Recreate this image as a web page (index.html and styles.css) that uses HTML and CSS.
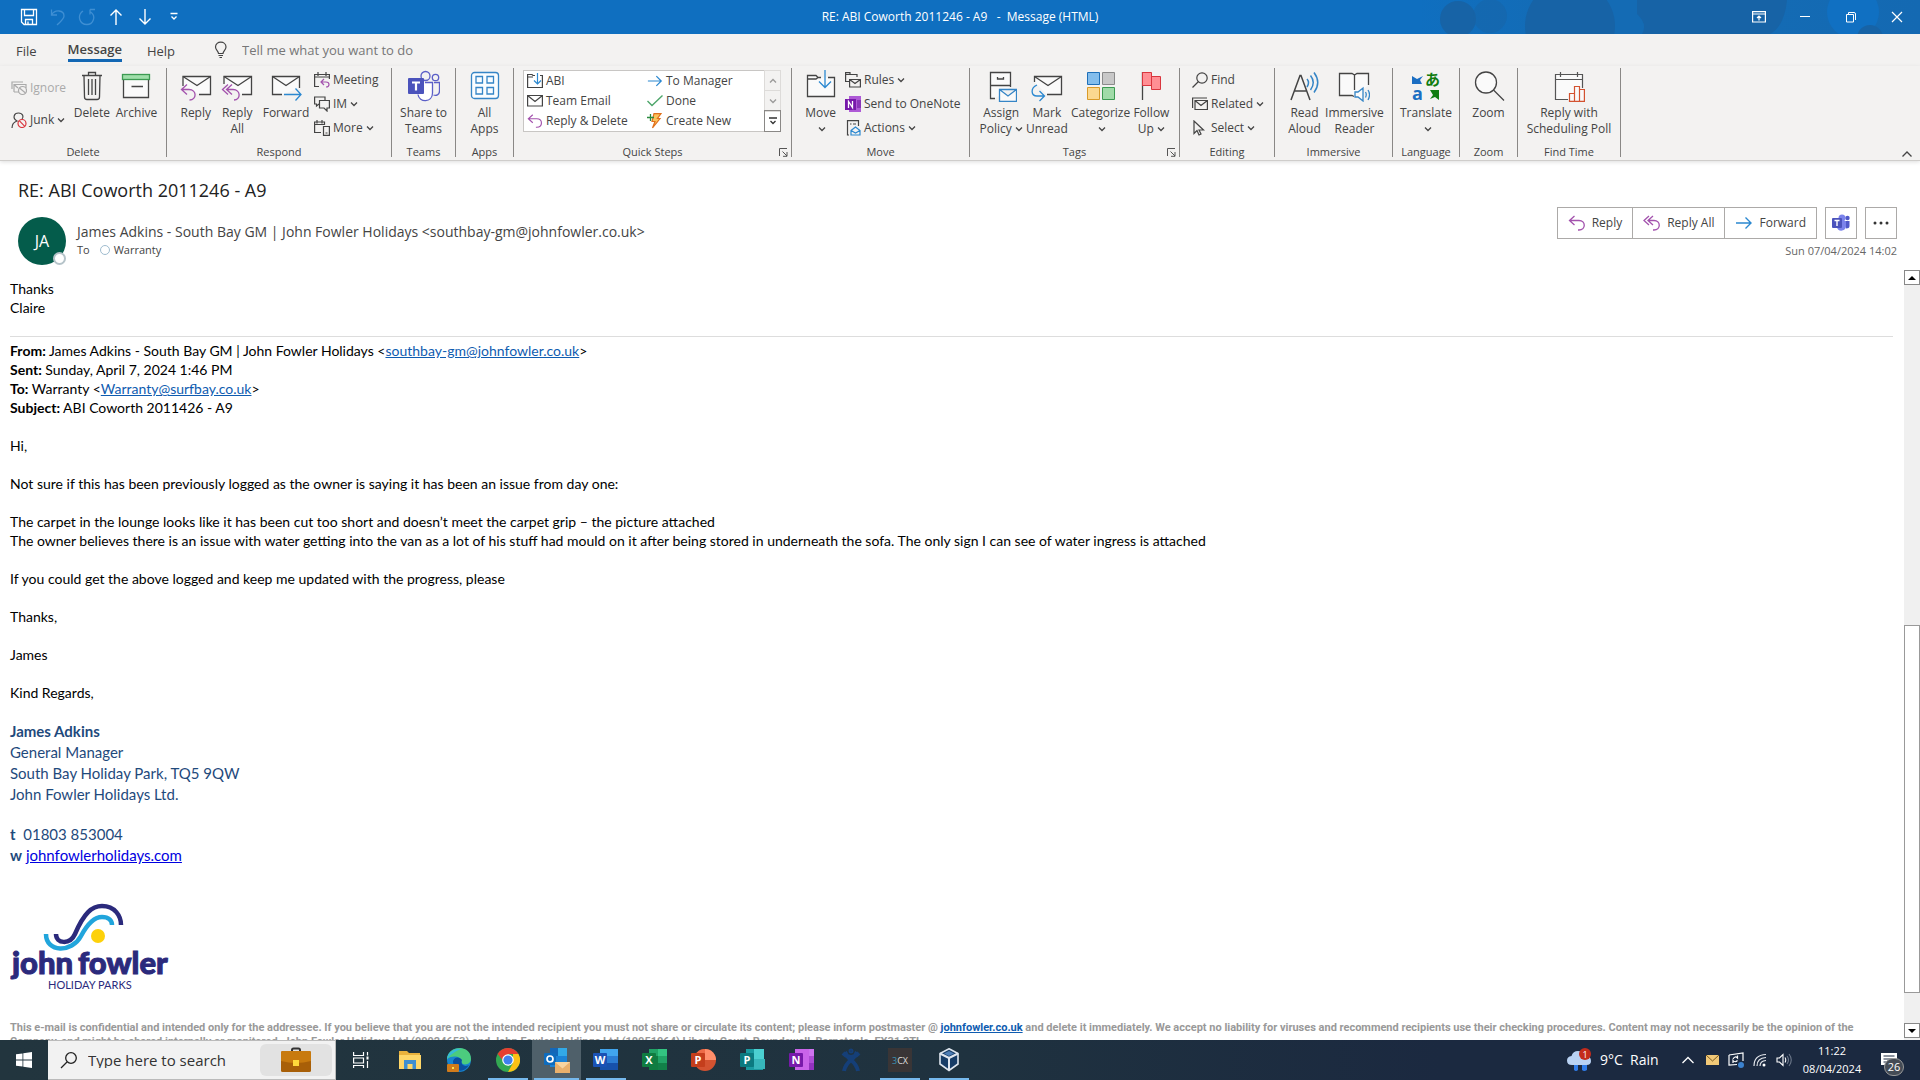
FILE: index.html
```html
<!doctype html>
<html lang="en">
<head>
  <meta charset="utf-8">
  <title>RE: ABI Coworth 2011246 - A9 - Message (HTML)</title>
  <link rel="stylesheet" href="styles.css">
</head>
<body>
  <!-- shared icons -->
  <svg class="defs" width="0" height="0">
    <symbol id="chev" viewBox="0 0 8 8"><path d="M1 2.500L4 5.500L7 2.500" fill="none" stroke="#444" stroke-width="1.300"/></symbol>
    <symbol id="reply" viewBox="0 0 18 16"><path d="M6.500 1L1.500 5.500L6.500 10M1.500 5.500H11C18 5.500 18 15 11 15H10" fill="none" stroke="#a352ad" stroke-width="1.300"/></symbol>
    <symbol id="replyall" viewBox="0 0 18 16"><path d="M6 1L1 5.500L6 10M10 1L5 5.500L10 10M5 5.500H11C18 5.500 18 15 11 15H10" fill="none" stroke="#a352ad" stroke-width="1.300"/></symbol>
    <symbol id="forward" viewBox="0 0 18 16"><path d="M1 8H16M10.500 2.500L16 8L10.500 13.500" fill="none" stroke="#2b88d0" stroke-width="1.400"/></symbol>
    <symbol id="launch" viewBox="0 0 9 9"><path d="M.5 8V.5H8M3.500 3.500L8 8M8 4V8.300H4" fill="none" stroke="#555"/></symbol>
  </svg>

  <header class="titlebar">
    <svg class="bubbles" width="500" height="34" viewBox="0 0 500 34">
      <defs><linearGradient id="fade"><stop offset="0" stop-color="#0f6fc0"/><stop offset=".3" stop-color="#146bb4"/><stop offset=".7" stop-color="#146bb4"/><stop offset="1" stop-color="#1469b2"/></linearGradient></defs>
      <rect width="500" height="34" fill="url(#fade)"/>
      <g fill="#1763a6">
        <circle cx="38" cy="19" r="18"/><circle cx="70" cy="16" r="17" opacity=".5"/><circle cx="150" cy="26" r="45"/>
        <path d="M217 0H367C365 20 358 30 350 34H222Q228 24 217 14Z"/>
      </g>
      <circle cx="433" cy="12" r="26" fill="#1070c2"/>
      <circle cx="450" cy="38" r="13" fill="#1763a6"/>
    </svg>
    <div class="quick">
      <button aria-label="Save"><svg width="18" height="18" fill="none" stroke="#fff" stroke-width="1.300"><path d="M1.500 1.500H16.500V16.500H4L1.500 14ZM4.500 1.500V7.500H13.500V1.500M5.500 16V11.500H12.500V16M8 16V13.500"/></svg></button>
      <button aria-label="Undo"><svg width="18" height="18" fill="none" stroke="#3f8fd3" stroke-width="1.300"><path d="M2.500 1.500V7H8M2.500 7C6 1 15 2 15 8C15 11 12 13 8 17"/></svg></button>
      <button aria-label="Redo"><svg width="18" height="18" fill="none" stroke="#3f8fd3" stroke-width="1.300"><path d="M12 1.500H17M12 1.500V6.500M12 3.500C19 8 15 16.500 9 16.500C1 16.500 -1 7 5 3"/></svg></button>
      <button aria-label="Previous"><svg width="18" height="18" fill="none" stroke="#fff" stroke-width="1.400"><path d="M9 17V2M3.500 7.500L9 2L14.500 7.500"/></svg></button>
      <button aria-label="Next"><svg width="18" height="18" fill="none" stroke="#fff" stroke-width="1.400"><path d="M9 1V16M3.500 10.500L9 16L14.500 10.500"/></svg></button>
      <button aria-label="Customise"><svg width="18" height="18" fill="none" stroke="#fff" stroke-width="1.300"><path d="M5.500 5.500H12.500M6.500 8.500L9 11L11.500 8.500"/></svg></button>
    </div>
    <div class="caption">RE: ABI Coworth 2011246 - A9 &nbsp; - &nbsp;Message (HTML)</div>
    <div class="window-buttons">
      <button aria-label="Ribbon options"><svg width="14" height="12" fill="none" stroke="#fff" stroke-width="1.200"><path d="M.6 .6H13.400V11H.6ZM.6 3H13.400M7 9.500V5M5 7L7 5L9 7"/></svg></button>
      <button aria-label="Minimise"><svg width="12" height="12" stroke="#fff"><path d="M1 5.500H11"/></svg></button>
      <button aria-label="Restore"><svg width="12" height="12" fill="none" stroke="#fff"><path d="M1.500 3.500H8.500V11H1.500ZM3.500 3V1.500H9Q10.500 1.500 10.500 3V9"/></svg></button>
      <button aria-label="Close"><svg width="12" height="12" stroke="#fff" stroke-width="1.200"><path d="M1 1L11 11M11 1L1 11"/></svg></button>
    </div>
  </header>

  <nav class="tabs">
    <button class="tab">File</button>
    <button class="tab active">Message</button>
    <button class="tab">Help</button>
    <svg class="bulb" width="14" height="18" fill="none" stroke="#444" stroke-width="1.200"><path d="M4.500 12.500C4.500 10 1.500 9 1.500 6C1.500 -.5 12 -.5 12 6C12 9 9 10 9 12.500ZM4.500 14.500H9M5.500 16.500H8"/></svg>
    <input class="tell" type="text" aria-label="Tell me" placeholder="Tell me what you want to do">
  </nav>

  <div class="ribbon">
    <section class="group g-delete">
      <div class="tools">
        <div class="stack two">
          <button class="small off"><svg width="16" height="16" fill="none" stroke="#aaa" stroke-width="1.200"><path d="M1 9V2H12M3 12V4.500H15V8M3 4.500L7 8M8 12H3"/><circle cx="11.500" cy="10.500" r="4"/><path d="M8.500 8L14.500 13"/></svg>Ignore</button>
          <button class="small"><svg width="16" height="16" fill="none" stroke="#444" stroke-width="1.200"><path d="M1 16C1 12 3 10 6 9C1 6 3 1 7.500 1C12 1 13 5 11 7"/><g stroke="#d9363e"><circle cx="11" cy="11.500" r="4"/><path d="M8.200 8.700L13.800 14.300"/></g></svg>Junk<svg class="chev"><use href="#chev"/></svg></button>
        </div>
        <button class="big"><svg width="32" height="32" fill="none" stroke="#444" stroke-width="1.300"><path d="M6 5.500H26M12.500 5V2.500H19.500V5M8 6L8.500 27Q8.500 29.500 11 29.500H21Q23.500 29.500 23.500 27L24 6M12.500 9V25M16 9V25M19.500 9V25"/></svg>Delete</button>
        <button class="big"><svg width="32" height="32" fill="none" stroke="#444" stroke-width="1.300"><path fill="#fafafa" d="M3.500 9.500V27.500H28.500V9.500M11.500 16.500H23"/><rect x="2.500" y="4.500" width="27" height="5" fill="#9fdfaa" stroke="#3c9a52"/></svg>Archive</button>
      </div>
      <div class="name">Delete</div>
    </section>

    <section class="group g-respond">
      <div class="tools">
        <button class="big"><svg width="32" height="32" fill="none" stroke="#444" stroke-width="1.300"><path fill="#fafafa" d="M3 16V6.500H30.500V24.500H19"/><path d="M3 6.500L17 15.500L30.500 6.500"/><path d="M7 14.500L1.500 19.500L7 24.500M2 19.500H9C17 19.500 17 30 9.500 30" stroke="#a352ad"/></svg>Reply</button>
        <button class="big"><svg width="32" height="32" fill="none" stroke="#444" stroke-width="1.300"><path fill="#fafafa" d="M3 14V6.500H30.500V24.500H21"/><path d="M3 6.500L17 15.500L30.500 6.500"/><path d="M7 14.500L1.500 19.500L7 24.500M11 14.500L5.500 19.500L11 24.500M6 19.500H12C20 19.500 20 30 13 30" stroke="#a352ad"/></svg>Reply<br>All</button>
        <button class="big"><svg width="32" height="32" fill="none" stroke="#444" stroke-width="1.300"><path fill="#fafafa" d="M12 24.500H2.500V6.500H29.500V18"/><path d="M2.500 6.500L16 15.500L29.500 6.500"/><path d="M14 24.500H31M25.500 18.500L31 24.500L25.500 30.500" stroke="#2b88d0"/></svg>Forward</button>
        <div class="stack">
          <button class="small"><svg width="16" height="16" fill="none" stroke="#444" stroke-width="1.200"><path d="M5 14.500H.6V2.500H15.400V7M.6 5H15.400M4 0V4M12 0V4"/><path d="M10 7L7 10L10 13M7 10H12C16 10 16 15 12 15" stroke="#a352ad"/></svg>Meeting</button>
          <button class="small"><svg width="16" height="16" fill="none" stroke="#444" stroke-width="1.200"><path d="M5 8L2.500 10V8H.6V1H11V4M5.500 4.500H15.400V12H13V15L10 12H5.500Z"/></svg>IM<svg class="chev"><use href="#chev"/></svg></button>
          <button class="small"><svg width="16" height="16" fill="none" stroke="#444" stroke-width="1.200"><path d="M7 12.500H.6V2H10.500V5M.6 4.500H10.500M3 0V3.500M8 0V3.500M9.500 6.500H15.400V15.400H9.500ZM11.500 13H13.500"/></svg>More<svg class="chev"><use href="#chev"/></svg></button>
        </div>
      </div>
      <div class="name">Respond</div>
    </section>

    <section class="group g-teams">
      <div class="tools">
        <button class="big"><svg width="32" height="32" fill="none" stroke="#5b5fc7" stroke-width="1.300"><path fill="#fff" d="M17 12.500H24.500V23C24.500 33 11 33 10 24.500"/><path d="M26 12.500H31.500V21C31.500 25 28 26 25.500 25"/><circle cx="17.500" cy="6" r="4.500"/><circle cx="27.500" cy="7.500" r="3.200"/><rect x="0" y="8" width="16" height="16" rx="1" fill="#4b53bc" stroke="none"/><path d="M4 12.500H12M8 12.500V20.500" stroke="#fff" stroke-width="2.200"/></svg>Share to<br>Teams</button>
      </div>
      <div class="name">Teams</div>
    </section>

    <section class="group g-apps">
      <div class="tools">
        <button class="big"><svg width="32" height="32" fill="#fafdff" stroke="#3585c6" stroke-width="1.300"><rect x="2.500" y="2.500" width="27" height="26" rx="3"/><path d="M7 6.500H13.500V13H7ZM18 6.500H24.500V13H18ZM7 17.500H13.500V24H7ZM18 17.500H24.500V24H18Z"/></svg>All<br>Apps</button>
      </div>
      <div class="name">Apps</div>
    </section>

    <section class="group g-quick">
      <div class="tools">
        <div class="gallery">
          <div class="steps">
            <button class="small"><svg width="16" height="16" fill="none" stroke="#444" stroke-width="1.200"><path d="M8 2.500H6L5 1.500H.6V14.500H15.400V2.500H13M.6 4H6"/><path d="M10.500 0V11M7 7.500L10.500 11L14 7.500" stroke="#2b88d0"/></svg>ABI</button>
            <button class="small"><svg width="16" height="16"><use href="#forward"/></svg>To Manager</button>
            <button class="small"><svg width="16" height="16" fill="none" stroke="#444" stroke-width="1.200"><path d="M.6 2.500H15.400V13H.6ZM.6 2.500L8 8.500L15.400 2.500"/></svg>Team Email</button>
            <button class="small"><svg width="16" height="16" fill="none" stroke="#4da66a" stroke-width="1.400"><path d="M.5 8L5 12.500L15.500 2.500"/></svg>Done</button>
            <button class="small"><svg width="16" height="16"><use href="#reply"/></svg>Reply &amp; Delete</button>
            <button class="small"><svg width="16" height="16" fill="none"><path d="M7 .6H14L10.500 5.500H13L5.500 15L8 8.500H5Z" fill="#fbc35a" stroke="#e0701c" stroke-width="1.200"/><path d="M0 4.500H7M3.500 1V8" stroke="#2b8a3e" stroke-width="1.300"/></svg>Create New</button>
          </div>
          <div class="spin">
            <button aria-label="Up" disabled><svg class="chev flip"><use href="#chev"/></svg></button>
            <button aria-label="Down" disabled><svg class="chev"><use href="#chev"/></svg></button>
            <button aria-label="More steps"><svg width="8" height="8" fill="none" stroke="#333" stroke-width="1.300"><path d="M0 1H8M1.500 4L4 6.500L6.500 4"/></svg></button>
          </div>
        </div>
      </div>
      <div class="name">Quick Steps<button class="launch" aria-label="Manage quick steps"><svg width="9" height="9"><use href="#launch"/></svg></button></div>
    </section>

    <section class="group g-move">
      <div class="tools">
        <button class="big"><svg width="32" height="32" fill="none" stroke="#444" stroke-width="1.300"><path fill="#fafafa" d="M16 7.500H13L11 5.500H2.500V26.500H29.500V7.500H23M2.500 9H11L13 7.500"/><path d="M20 0V17M14 11.500L20 17.500L26 11.500" stroke="#2b88d0"/></svg>Move<br><svg class="chev"><use href="#chev"/></svg></button>
        <div class="stack">
          <button class="small"><svg width="16" height="16" fill="none" stroke="#444" stroke-width="1.200"><path d="M4 9.500H.6V.6H5V2.500H12V5M.6 2.500H5M4.600 7.500H15.400V15H4.600ZM4.600 7.500L10 11.500L15.400 7.500"/></svg>Rules<svg class="chev"><use href="#chev"/></svg></button>
          <button class="small"><svg width="16" height="16"><path d="M4 0H16V16H4Z" fill="#ae5ad6"/><path d="M12 4H16V12H12Z" fill="#8a35b8"/><path d="M0 3H11V14H0Z" fill="#7719aa"/><path d="M3.500 12V5.500L7.500 11.500V5" fill="none" stroke="#fff" stroke-width="1.300"/></svg>Send to OneNote</button>
          <button class="small"><svg width="16" height="16" fill="none" stroke="#444" stroke-width="1.200"><path d="M4 15H2.500V.6H13.500V6M5 4H6.500M8 4H11"/><path d="M6 10.500L10.500 7L15 10.500V15H6ZM6 10.500L10.500 13L15 10.500" stroke="#2b88d0"/></svg>Actions<svg class="chev"><use href="#chev"/></svg></button>
        </div>
      </div>
      <div class="name">Move</div>
    </section>

    <section class="group g-tags">
      <div class="tools">
        <button class="big"><svg width="32" height="32" fill="#fafafa" stroke="#444" stroke-width="1.300"><path d="M10 28.500H5.500V2.500H25.500V17M5.500 15.500H25.500M12.500 7V9H18.500V7"/><path d="M14.500 19.500H31.500V31.300H14.500ZM14.500 19.500L23 26L31.500 19.500" stroke="#3585c6"/></svg>Assign<br>Policy<svg class="chev"><use href="#chev"/></svg></button>
        <button class="big"><svg width="32" height="32" fill="none" stroke="#444" stroke-width="1.300"><path fill="#fafafa" d="M3.500 12V6.500H30.500V24.500H16"/><path d="M3.500 6.500L17 15.500L30.500 6.500"/><path d="M6 15C-1 18 0 26 6 26H13M8.500 21L13.500 26L8.500 31" stroke="#2b88d0"/></svg>Mark<br>Unread</button>
        <button class="big"><svg width="32" height="32"><path d="M2.500 2.500H14.500V14.500H2.500Z" fill="#83bdec" stroke="#1e6fb8"/><path d="M17.500 2.500H29.500V14.500H17.500Z" fill="#c8c8c8" stroke="#8a8a8a"/><path d="M2.500 17.500H14.500V29.500H2.500Z" fill="#fbd88f" stroke="#d99a28"/><path d="M17.500 17.500H29.500V29.500H17.500Z" fill="#a0dba8" stroke="#3c9a52"/></svg>Categorize<br><svg class="chev"><use href="#chev"/></svg></button>
        <button class="big"><svg width="32" height="32"><path d="M7.500 2V30" stroke="#444" stroke-width="1.300"/><path d="M7.500 2.500H16.500V6.500H25.500V19.500H16.500V15.500H7.500Z" fill="#ff8f94" stroke="#d9363e"/><path d="M16.500 6V16" stroke="#d9363e"/></svg>Follow<br>Up<svg class="chev"><use href="#chev"/></svg></button>
      </div>
      <div class="name">Tags<button class="launch" aria-label="Message options"><svg width="9" height="9"><use href="#launch"/></svg></button></div>
    </section>

    <section class="group g-edit">
      <div class="tools">
        <div class="stack">
          <button class="small"><svg width="16" height="16" fill="none" stroke="#444" stroke-width="1.200"><circle cx="10" cy="6" r="5.200"/><path d="M6.500 9.500L.5 15.500"/></svg>Find</button>
          <button class="small"><svg width="16" height="16" fill="none" stroke="#444" stroke-width="1.200"><path d="M.6 12V2H15M3 4.500H15.400V13.500H3ZM3 4.500L9 9.500L15.400 4.500"/></svg>Related<svg class="chev"><use href="#chev"/></svg></button>
          <button class="small"><svg width="16" height="16" fill="none" stroke="#444" stroke-width="1.200"><path d="M2 1V13.500L5 10.500L7 15L9 14L7 10H11.500Z"/></svg>Select<svg class="chev"><use href="#chev"/></svg></button>
        </div>
      </div>
      <div class="name">Editing</div>
    </section>

    <section class="group g-immersive">
      <div class="tools">
        <button class="big"><svg width="32" height="32" fill="none" stroke="#444" stroke-width="1.500"><path d="M3 30L12 5.500H13L22 30M6.500 21H19"/><g stroke="#3585c6"><path d="M19 9Q22 12.500 19 17M22.500 5.500Q28 12.500 22.500 20M26 2.500Q33.500 12.500 26 22.500"/></g></svg>Read<br>Aloud</button>
        <button class="big"><svg width="32" height="32" fill="#fafafa" stroke="#444" stroke-width="1.300"><path d="M16 26.500L14 25.500H1.500V3.500H14L16.500 5L19 3.500H30.500V15M16.500 5V20"/><path d="M17 22V27H20L25 31V18L20 22ZM27.500 22Q29 24.500 27.500 27.500M30 20Q33 24.500 30 30" stroke="#3585c6"/></svg>Immersive<br>Reader</button>
      </div>
      <div class="name">Immersive</div>
    </section>

    <section class="group g-lang">
      <div class="tools">
        <button class="big"><svg class="loose" width="32" height="32"><path d="M2 6L7 9L13 6L10 10L12 14H2Z" fill="#1b6ec2"/><path d="M20 20H29V30L25 27L20 29L23 25Z" fill="#107c10"/><text class="tr-a" x="2" y="30">a</text><text class="tr-j" x="15" y="15">あ</text></svg>Translate<br><svg class="chev"><use href="#chev"/></svg></button>
      </div>
      <div class="name">Language</div>
    </section>

    <section class="group g-zoom">
      <div class="tools">
        <button class="big"><svg width="32" height="32" fill="#fafafa" stroke="#444" stroke-width="1.300"><circle cx="13" cy="12.500" r="10.500"/><path d="M20.500 20L31 30.500"/></svg>Zoom</button>
      </div>
      <div class="name">Zoom</div>
    </section>

    <section class="group g-time">
      <div class="tools">
        <button class="big"><svg width="32" height="32" fill="#fafafa" stroke="#555" stroke-width="1.200"><path d="M15 29.500H2.500V4.500H29.500V18M2.500 9.500H29.500M7.500 2V7M24.500 2V7"/><path d="M16.500 23.500H21.500V31.400H16.500ZM21.500 16.500H26.500V31.400H21.500ZM26.500 19.500H31.400V31.400H26.500Z" stroke="#d35230"/></svg>Reply with<br>Scheduling Poll</button>
      </div>
      <div class="name">Find Time</div>
    </section>
    <button class="collapse" aria-label="Collapse ribbon"><svg width="10" height="6" fill="none" stroke="#444" stroke-width="1.300"><path d="M.5 5.500L5 1L9.500 5.500"/></svg></button>
  </div>

  <div class="message-head">
    <h1>RE: ABI Coworth 2011246 - A9</h1>
    <div class="sender">
      <div class="avatar">JA<span class="presence"></span></div>
      <div class="who">
        <div class="from">James Adkins - South Bay GM | John Fowler Holidays &lt;southbay-gm@johnfowler.co.uk&gt;</div>
        <div class="to"><span>To</span><i class="dot"></i><b>Warranty</b></div>
      </div>
      <div class="side">
        <div class="actions">
          <div class="joined">
            <button><svg width="18" height="16"><use href="#reply"/></svg>Reply</button>
            <button><svg width="18" height="16"><use href="#replyall"/></svg>Reply All</button>
            <button><svg width="18" height="16"><use href="#forward"/></svg>Forward</button>
          </div>
          <button class="square" aria-label="Teams"><svg width="18" height="18"><circle cx="10" cy="4" r="3.500" fill="#7b83eb"/><circle cx="15.500" cy="4" r="2.200" fill="#5059c9"/><path d="M12 7H17.500V12Q17.500 14.500 14 14.500Z" fill="#5059c9"/><path d="M5 7H14V12C14 18 5 18 5 13Z" fill="#7b83eb"/><rect y="4" width="10" height="10" rx="1" fill="#4b53bc"/><path d="M2.500 6.500H7.500M5 6.500V12" stroke="#fff" stroke-width="1.400"/></svg></button>
          <button class="square" aria-label="More actions"><svg width="16" height="4" fill="#333"><circle cx="2" cy="2" r="1.500"/><circle cx="8" cy="2" r="1.500"/><circle cx="14" cy="2" r="1.500"/></svg></button>
        </div>
        <div class="date">Sun 07/04/2024 14:02</div>
      </div>
    </div>
  </div>

  <main class="reader">
    <article class="mail">
      <p>Thanks<br>Claire</p>
      <hr>
      <p><strong>From:</strong> James Adkins - South Bay GM | John Fowler Holidays &lt;<a href="mailto:southbay-gm@johnfowler.co.uk">southbay-gm@johnfowler.co.uk</a>&gt;<br>
      <strong>Sent:</strong> Sunday, April 7, 2024 1:46 PM<br>
      <strong>To:</strong> Warranty &lt;<a href="mailto:Warranty@surfbay.co.uk">Warranty@surfbay.co.uk</a>&gt;<br>
      <strong>Subject:</strong> ABI Coworth 2011426 - A9</p>
      <p>Hi,</p>
      <p>Not sure if this has been previously logged as the owner is saying it has been an issue from day one:</p>
      <p>The carpet in the lounge looks like it has been cut too short and doesn’t meet the carpet grip – the picture attached<br>
      The owner believes there is an issue with water getting into the van as a lot of his stuff had mould on it after being stored in underneath the sofa. The only sign I can see of water ingress is attached</p>
      <p>If you could get the above logged and keep me updated with the progress, please</p>
      <p>Thanks,</p>
      <p>James</p>
      <p>Kind Regards,</p>
      <div class="signature">
        <p><strong>James Adkins</strong><br>General Manager<br>South Bay Holiday Park, TQ5 9QW<br>John Fowler Holidays Ltd.</p>
        <p><strong>t</strong>&nbsp; 01803 853004<br><strong>w</strong> <a href="#">johnfowlerholidays.com</a></p>
      </div>
      <svg class="logo" width="170" height="88" viewBox="0 0 170 88">
        <path d="M36 31C36 50 62 50 71 33C79 18 86 14 92 14C99 14 102 18 102 22" fill="none" stroke="#21a5dc" stroke-width="4.500"/>
        <path d="M46 31C46 41 60 42 65 31C74 10 82 3 92 3C105 3 111 13 111 22" fill="none" stroke="#2b2a7c" stroke-width="4.500"/>
        <circle cx="88" cy="33" r="7" fill="#fdd10a"/>
        <text class="logo-name" x="2" y="71">john</text>
        <text class="logo-name" x="68" y="71">fowler</text>
        <text class="logo-sub" x="38" y="86">HOLIDAY PARKS</text>
      </svg>
      <div class="legal">This e-mail is confidential and intended only for the addressee. If you believe that you are not the intended recipient you must not share or circulate its content; please inform postmaster @ <a href="#">johnfowler.co.uk</a> and delete it immediately. We accept no liability for viruses and recommend recipients use their checking procedures. Content may not necessarily be the opinion of the<br>Company, and might be shared internally or monitored. John Fowler Holidays Ltd (00924653) and John Fowler Holdings Ltd (10051064) Liberty Court, Roundswell, Barnstaple, EX31 3TL</div>
    </article>
    <div class="scrollbar">
      <button aria-label="Scroll up"><svg width="8" height="4"><path d="M0 4L4 0L8 4Z"/></svg></button>
      <div class="track"><div class="thumb"></div></div>
      <button aria-label="Scroll down"><svg width="8" height="4"><path d="M0 0L4 4L8 0Z"/></svg></button>
    </div>
  </main>

  <footer class="taskbar">
    <button class="start" aria-label="Start"><svg width="16" height="16" fill="#fff"><path d="M0 2.300L6.500 1.400V7.600H0ZM7.300 1.300L16 0V7.600H7.300ZM0 8.400H6.500V14.600L0 13.700ZM7.300 8.400H16V16L7.300 14.700Z"/></svg></button>
    <div class="search">
      <svg width="17" height="17" fill="none" stroke="#222" stroke-width="1.300"><circle cx="11" cy="6" r="5.300"/><path d="M7 10L1 16"/></svg>
      <input type="text" aria-label="Search" placeholder="Type here to search">
      <button aria-label="Search highlights"><svg width="30" height="26"><path d="M11 5V3Q11 1.500 12.500 1.500H17.500Q19 1.500 19 3V5" fill="none" stroke="#333" stroke-width="2"/><rect y="4" width="30" height="21" rx="1.500" fill="#a85f08"/><path d="M0 5.500Q0 4 1.500 4H28.500Q30 4 30 5.500V14Q15 18 0 14Z" fill="#c87a0e"/><rect x="12" y="13" width="6" height="6" fill="#ffd93b"/></svg></button>
    </div>
    <button class="app" aria-label="Task view"><svg width="16" height="16" fill="none" stroke="#fff" stroke-width="1.200"><path d="M.6 0V3.500H10.500V0M.6 6H10.500V11H.6ZM.6 16V13.500H10.500V16M14.500 0V3.500M14.500 9V16"/><rect x="13.500" y="4.500" width="2" height="3" fill="#fff" stroke="none"/></svg></button>
    <button class="app" aria-label="File Explorer"><svg width="24" height="24"><path d="M1 3H9L11 5H22V20H1Z" fill="#eab23c"/><path d="M1 7H23V21H1Z" fill="#ffd768"/><path d="M6 21V12H18V21H14.500V16H9.500V21Z" fill="#3f8fd0"/></svg></button>
    <button class="app" aria-label="Edge"><svg width="24" height="24"><circle cx="12" cy="12" r="12" fill="#1784d0"/><path d="M0 11C1 -3 24 -4 24 11C24 17 15 18 14.500 14C16 9 6 6 0 11Z" fill="#4ccb7e"/><path d="M0 12C0 4 8 0 14 1C9 3 2 7 0 12Z" fill="#35b9dc"/><path d="M6 13C8 8 13 9 15 12C13 16 17 20 22 17C17 26 6 24 6 13Z" fill="#0b4f9e"/><rect x="0" y="16" width="12" height="8" rx="1" fill="#d07b1b"/><rect x="5" y="19" width="2" height="2" fill="#ffe04b"/></svg></button>
    <button class="app open" aria-label="Chrome"><svg width="24" height="24"><circle cx="12" cy="12" r="12" fill="#33a852"/><path d="M12 12H6.500L1.600 6A12 12 0 0 1 22.400 6H12Z" fill="#e53e31"/><path d="M22.400 6A12 12 0 0 1 12 24L17 15V6Z" fill="#fbc116"/><circle cx="12" cy="12" r="5.800" fill="#fff"/><circle cx="12" cy="12" r="4.600" fill="#3f80ee"/></svg></button>
    <button class="app open current" aria-label="Outlook"><svg width="26" height="26"><rect x="6" y="1" width="17" height="18" fill="#1467b8"/><path d="M14 1H23V10H14Z" fill="#32a9e7"/><path d="M6 9H23V20H6Z" fill="#1c83d6"/><rect x="0" y="6" width="12" height="12" rx="1" fill="#0f6cbd"/><circle cx="6" cy="12" r="3" fill="none" stroke="#fff" stroke-width="1.700"/><path d="M11 15H26V26H11Z" fill="#e9b06c"/><path d="M11 15L18.500 21.500L26 15Z" fill="#f7d4a0"/></svg></button>
    <button class="app open" aria-label="Word"><svg width="26" height="24"><path d="M7 1H25V8H7Z" fill="#41a5ee"/><path d="M7 8H25V15H7Z" fill="#2b7cd3"/><path d="M7 15H25V22H7Z" fill="#1751ab"/><rect y="5" width="14" height="14" rx="1" fill="#1a52b5"/><text class="letter" x="7" y="16">W</text></svg></button>
    <button class="app" aria-label="Excel"><svg width="26" height="24"><path d="M7 1H25V22H7Z" fill="#21a366"/><path d="M16 1H25V8H16Z" fill="#33c481"/><path d="M7 8H16V22H7Z" fill="#107c41"/><path d="M16 15H25V22H16Z" fill="#128048"/><rect y="5" width="14" height="14" rx="1" fill="#107c41"/><text class="letter" x="7" y="16">X</text></svg></button>
    <button class="app" aria-label="PowerPoint"><svg width="26" height="24"><circle cx="14" cy="12" r="11" fill="#d35230"/><path d="M14 1A11 11 0 0 1 25 12H14Z" fill="#ff8f6b"/><path d="M14 1A11 11 0 0 0 3 12H14Z" fill="#ed6c47"/><rect y="5" width="14" height="14" rx="1" fill="#c43e1c"/><text class="letter" x="7" y="16">P</text></svg></button>
    <button class="app" aria-label="Publisher"><svg width="26" height="24"><path d="M6 1H23V22H6Z" fill="#1a9ba1"/><path d="M14 1H24V11H14Z" fill="#4bd0d1"/><path d="M14 11H25V21H14Z" fill="#37b6bb"/><rect y="5" width="14" height="14" rx="1" fill="#0b7a80"/><text class="letter" x="7" y="16">P</text></svg></button>
    <button class="app" aria-label="OneNote"><svg width="26" height="24"><path d="M6 1H20V22H6Z" fill="#ca64ea"/><path d="M20 1H25V8H20Z" fill="#ce73ef"/><path d="M20 8H25V15H20Z" fill="#ae4bd5"/><path d="M20 15H25V22H20Z" fill="#9332bf"/><rect y="5" width="14" height="14" rx="1" fill="#7719aa"/><text class="letter" x="7" y="16">N</text></svg></button>
    <button class="app" aria-label="Confluence"><svg width="22" height="24" fill="none" stroke="#153f78" stroke-width="4"><path d="M3 5Q11 13 19 5M5 4Q8 10 11 12Q17 17 18 23M17 4Q14 10 11 12Q5 17 4 23"/><circle cx="11" cy="3" r="1" stroke-width="3"/></svg></button>
    <button class="app open" aria-label="3CX"><svg width="24" height="24"><rect width="24" height="24" fill="#393536"/><text class="cx" x="4" y="16"><tspan fill="#3a93b5">3</tspan>CX</text></svg></button>
    <button class="app open" aria-label="VirtualBox"><svg width="20" height="24"><path d="M10 .8L19 5.500V16L10 22.500L1 16V5.500Z" fill="#173c66" stroke="#dfe6ef" stroke-width="1.600"/><path d="M10 10L1 5.500M10 10L19 5.500M10 10V22" stroke="#dfe6ef" stroke-width="2"/><path d="M5 5.500L10 3L15 5.500L10 8Z" fill="#4d7db5"/></svg></button>

    <div class="tray">
      <button class="weather"><svg width="24" height="24"><path d="M7 14H11V22Q9 24 7 22ZM15 14H20V22Q17 24 15 22Z" fill="#2f7be8"/><path d="M5 17Q0 17 0 12.500Q0 8.500 4.500 8Q6 3 11 3Q16 3 18 8Q24 8 24 13Q24 17 19.500 17Z" fill="#b9d2f4"/><circle cx="18" cy="6" r="6" fill="#c42b1c"/><text class="badge" x="18" y="10">1</text></svg>9°C&nbsp; Rain</button>
      <button aria-label="Hidden icons"><svg width="12" height="8" fill="none" stroke="#fff" stroke-width="1.300"><path d="M.5 7L6 1.500L11.500 7"/></svg></button>
      <button aria-label="New mail"><svg width="13" height="10"><path d="M0 0H13V10H0Z" fill="#f1c877"/><path d="M0 0L6.500 6L13 0" fill="none" stroke="#7b5a1f"/></svg></button>
      <button aria-label="Display"><svg width="16" height="16" fill="none" stroke="#fff" stroke-width="1.200"><path d="M1 3L15 1V9M9 12.500L1 13V3M5 7Q7 3.500 9.500 6V3.500M5 11V8.500Q7 11 9.500 8.500"/><circle cx="13" cy="13" r="3" fill="#3b82d0" stroke="none"/></svg></button>
      <button aria-label="Network"><svg width="14" height="14" fill="none" stroke="#e4e7ec" stroke-width="1.200"><path d="M1 13Q1 2 13 1.500M4 13Q4 5 13 4.500M7 13Q7 8 13 7.500"/><circle cx="11" cy="12" r="1.500" fill="#fff" stroke="none"/></svg></button>
      <button aria-label="Volume"><svg width="16" height="14" fill="none" stroke="#fff" stroke-width="1.100"><path d="M1 5H3.500L7 1.500V12.500L3.500 9H1ZM9 4.500Q10.500 7 9 9.500"/><path d="M11 3Q14 7 11 11M13 1Q17.500 7 13 13" stroke="#6d788a"/></svg></button>
      <button class="clock">11:22<br>08/04/2024</button>
      <button class="notes" aria-label="26 notifications"><svg width="16" height="15"><path d="M0 0H16V12H12L8 15V12H0Z" fill="#fff"/><path d="M2.500 3H13.500M2.500 6H13.500M2.500 9H9" stroke="#1b2940" stroke-width="1.200"/></svg><span>26</span></button>
    </div>
  </footer>
</body>
</html>
```
FILE: styles.css
```css
* {
  box-sizing: border-box;
}

body {
  margin: 0;
  height: 100vh;
  display: flex;
  flex-direction: column;
  overflow: hidden;
  background: #fff;
  color: #444;
  font: 12px/16px "Open Sans", sans-serif;
}

button,
input {
  margin: 0;
  padding: 0;
  border: 0;
  background: none;
  color: inherit;
  font: inherit;
}

svg {
  flex: none;
}

.defs {
  position: absolute;
}

.loose {
  overflow: visible;
}

.chev {
  width: 8px;
  height: 8px;
  margin-left: 3px;
}

/* title bar */
.titlebar {
  position: relative;
  height: 34px;
  flex: none;
  display: grid;
  grid-template-columns: 1fr auto 1fr;
  align-items: center;
  background: #0f6fc0;
  color: #fff;
}

.bubbles {
  position: absolute;
  right: 0;
  top: 0;
}

.quick {
  display: flex;
  padding-left: 15px;
}

.quick button {
  width: 29px;
  display: flex;
  padding-left: 5px;
}

.window-buttons {
  position: relative;
  display: flex;
  justify-content: flex-end;
}

.window-buttons button {
  width: 46px;
  display: flex;
  justify-content: center;
}

/* tabs */
.tabs {
  flex: none;
  height: 32px;
  display: flex;
  align-items: center;
  padding-left: 16px;
  background: #f3f2f1;
  font-size: 13px;
}

.tab {
  height: 24px;
  margin-right: 25px;
  padding-top: 1px;
}

.tab.active {
  margin-left: 6px;
  border-bottom: 3px solid #1267b4;
  font-weight: 600;
}

.bulb {
  margin: 0 14px 0 14px;
}

.tell {
  width: 300px;
}

.tell::placeholder {
  color: #777;
  opacity: 1;
}

/* ribbon */
.ribbon {
  position: relative;
  flex: none;
  height: 95px;
  display: flex;
  padding-top: 2px;
  background: #f3f2f1;
  border-bottom: 1px solid #cfcdcb;
  box-shadow: 0 1px 4px #ddd;
}

.group {
  height: 89px;
  display: flex;
  flex-direction: column;
  justify-content: space-between;
  border-right: 1px solid #8a8886;
}

.tools {
  display: flex;
  align-items: flex-start;
}

.name {
  position: relative;
  line-height: 10px;
  font-size: 11px;
  text-align: center;
}

.big {
  flex: 1 1 auto;
  padding-top: 2px;
  line-height: 16px;
  white-space: nowrap;
}

.big > svg:first-child {
  display: block;
  margin: 0 auto 3px;
}

.stack {
  display: flex;
  flex-direction: column;
}

.stack.two {
  padding-top: 8px;
  gap: 8px;
}

.small {
  height: 24px;
  display: flex;
  align-items: center;
  white-space: nowrap;
}

.small > svg:first-child {
  margin-right: 3px;
}

.off {
  color: #aaa;
}

.launch {
  position: absolute;
  right: 3px;
  top: 1px;
  display: flex;
}

.g-delete { width: 167px; }
.g-delete .tools { padding: 0 6px 0 11px; }
.g-delete .stack { width: 60px; }
.g-respond { width: 225px; }
.g-respond .tools { padding-left: 8px; }
.g-respond .stack { width: 77px; }
.g-teams { width: 64px; }
.g-apps { width: 58px; }
.g-quick { width: 278px; }
.g-move { width: 178px; }
.g-move .tools { padding-left: 4px; }
.g-move .stack { width: 124px; }
.g-tags { width: 210px; }
.g-tags .tools { padding: 0 8px; }
.g-edit { width: 95px; }
.g-edit .tools { padding-left: 12px; }
.g-immersive { width: 118px; }
.g-immersive .tools { padding: 0 6px 0 11px; }
.g-lang { width: 67px; }
.g-zoom { width: 58px; }
.g-time { width: 103px; }

.gallery {
  height: 62px;
  width: 258px;
  margin: 2px 0 0 9px;
  display: flex;
  background: #fff;
  border: 1px solid #c8c6c4;
}

.steps {
  flex: 1;
  display: grid;
  grid-template-columns: 120px 1fr;
  grid-auto-rows: 20px;
  padding-left: 3px;
}

.steps .small {
  height: 20px;
}

.spin {
  width: 15px;
  display: flex;
  flex-direction: column;
}

.spin button {
  flex: 1;
  display: flex;
  align-items: center;
  justify-content: center;
  outline: 1px solid #8a8886;
}

.spin button:disabled {
  outline: 1px solid #dddbd9;
  background: #f3f2f1;
}

.spin .chev {
  margin: 0;
  opacity: 0.5;
}

.spin .flip {
  transform: rotate(180deg);
}

.collapse {
  margin-left: auto;
  padding: 0 8px 3px 0;
  display: flex;
  align-items: flex-end;
}

.tr-a {
  font: bold 18px "Open Sans", sans-serif;
  fill: #1b6ec2;
}

.tr-j {
  font: bold 15px "Noto Sans CJK JP", sans-serif;
  fill: #107c10;
}

/* message header */
.message-head {
  flex: none;
  padding: 17px 23px 0 18px;
}

h1 {
  margin: 0;
  color: #222;
  font-size: 18px;
  font-weight: 400;
  line-height: 24px;
}

.sender {
  display: flex;
  padding-top: 5px;
}

.avatar {
  position: relative;
  width: 48px;
  height: 48px;
  margin-top: 10px;
  border-radius: 50%;
  background: #045c4b;
  color: #fff;
  font-size: 16px;
  line-height: 48px;
  text-align: center;
}

.presence {
  position: absolute;
  right: 0;
  bottom: 0;
  width: 13px;
  height: 13px;
  border: 2px solid #b5c3c9;
  border-radius: 50%;
  background: #fff;
}

.who {
  padding: 15px 0 0 11px;
}

.from {
  font-size: 14px;
  line-height: 20px;
}

.to {
  display: flex;
  align-items: center;
  font-size: 11px;
}

.to b {
  font-weight: 400;
}

.dot {
  width: 10px;
  height: 10px;
  margin: 0 4px 0 10px;
  border: 1px solid #9fbccf;
  border-radius: 50%;
}

.side {
  margin-left: auto;
}

.actions {
  display: flex;
  gap: 8px;
}

.joined {
  display: flex;
  border: 1px solid #acaaa8;
}

.joined button {
  height: 30px;
  display: flex;
  align-items: center;
  gap: 6px;
  padding: 0 10px;
}

.joined button + button {
  border-left: 1px solid #acaaa8;
}

.square {
  width: 32px;
  height: 32px;
  display: flex;
  align-items: center;
  justify-content: center;
  border: 1px solid #acaaa8;
}

.date {
  margin-top: 4px;
  color: #666;
  font-size: 11px;
  text-align: right;
}

/* message text */
.reader {
  flex: 1;
  min-height: 0;
  display: flex;
  padding-top: 5px;
}

.mail {
  flex: 1;
  min-width: 0;
  overflow: hidden;
  padding: 9px 11px 0 10px;
  color: #000;
  font: 14px/19px Lato, sans-serif;
}

.mail p {
  margin: 0 0 19px;
}

.mail a {
  color: #0f5cb0;
}

.mail hr {
  margin: 0 0 4px;
  border: 0;
  border-top: 1px solid #ddd;
}

.mail .signature {
  color: #1f4a7c;
  font-size: 15px;
  line-height: 21px;
}

.mail .signature p {
  margin-bottom: 19px;
}

.mail .signature a {
  color: #0000e0;
}

.logo {
  display: block;
  margin-top: 37px;
}

.logo-name {
  font: 900 31px Lato, sans-serif;
  fill: #2b2a7c;
  stroke: #2b2a7c;
}

.logo-sub {
  font: 11px Lato, sans-serif;
  fill: #2b2a7c;
}

.legal {
  margin-top: 30px;
  color: #999;
  font: bold 11px/14px Roboto, sans-serif;
}

.scrollbar {
  width: 16px;
  display: flex;
  flex-direction: column;
  padding-bottom: 2px;
  background: #f0f0f0;
}

.scrollbar button {
  height: 15px;
  display: flex;
  align-items: center;
  justify-content: center;
  background: #fff;
  border: 1px solid #888;
}

.track {
  flex: 1;
  display: flex;
  flex-direction: column;
  justify-content: flex-end;
  padding-bottom: 30px;
}

.thumb {
  height: 52%;
  background: #fff;
  border: 1px solid #999;
}

/* taskbar */
.taskbar {
  flex: none;
  height: 40px;
  display: flex;
  background: linear-gradient(90deg, #22353e, #1f323f 50%, #1b2940 75%);
  color: #fff;
}

.start {
  width: 48px;
  display: flex;
  align-items: center;
  justify-content: center;
}

.search {
  width: 288px;
  display: flex;
  align-items: center;
  padding-left: 12px;
  background: #f2f2f2;
  border: 1px solid #bbb;
  border-left: 0;
}

.search input {
  flex: 1;
  min-width: 0;
  margin-left: 11px;
  font-size: 15px;
}

.search input::placeholder {
  color: #333;
  opacity: 1;
}

.search button {
  width: 72px;
  height: 32px;
  margin-right: 3px;
  display: flex;
  align-items: center;
  justify-content: center;
  border-radius: 6px;
  background: #e2e2e2;
}

.app {
  width: 49px;
  display: flex;
  align-items: center;
  justify-content: center;
}

.app.open {
  background: linear-gradient(#76b9ed, #76b9ed) center bottom / 40px 2px no-repeat;
}

.app.current {
  background: linear-gradient(#76b9ed, #76b9ed) center bottom / 45px 2px no-repeat, #4f606a;
}

.letter {
  font: bold 11px "Open Sans", sans-serif;
  fill: #fff;
  text-anchor: middle;
}

.cx {
  font: 9px "Open Sans", sans-serif;
  fill: #ddd;
}

.tray {
  margin-left: auto;
  display: flex;
}

.tray button {
  width: 24px;
  display: flex;
  align-items: center;
  justify-content: center;
}

.tray .weather {
  width: 109px;
  justify-content: flex-start;
  gap: 9px;
  font-size: 14px;
}

.badge {
  font: 9px "Open Sans", sans-serif;
  fill: #fff;
  text-anchor: middle;
}

.tray .clock {
  width: 72px;
  display: block;
  font-size: 11px;
  line-height: 18px;
}

.tray .notes {
  position: relative;
  width: 52px;
  padding-right: 11px;
}

.notes span {
  position: absolute;
  right: 16px;
  bottom: 4px;
  width: 20px;
  height: 18px;
  border: 1px solid #999;
  border-radius: 9px;
  background: #444b55;
  font-size: 11px;
}
```
